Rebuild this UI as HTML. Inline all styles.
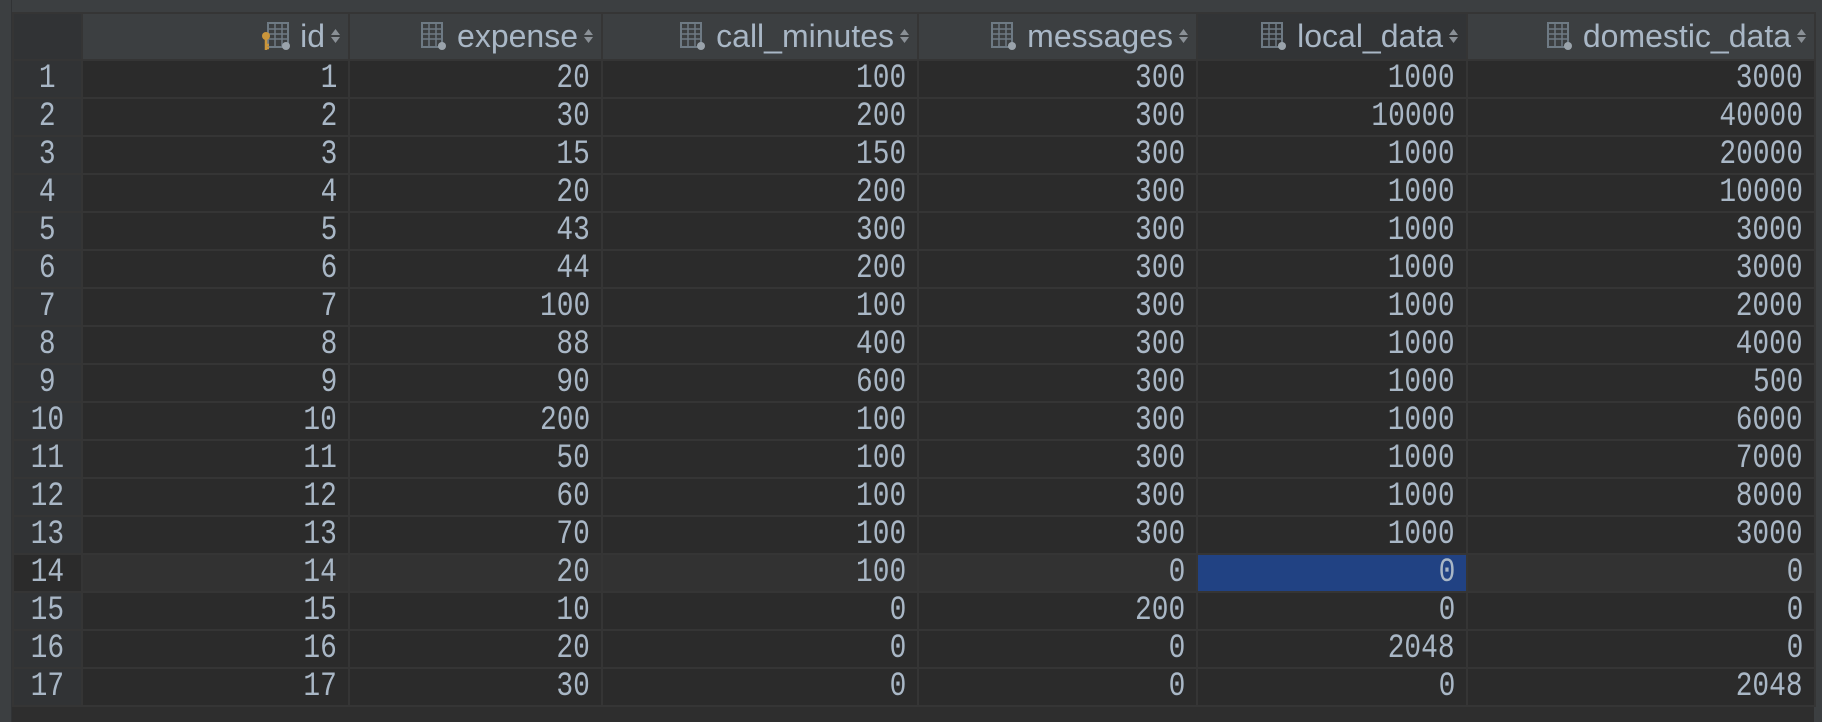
<!DOCTYPE html>
<html><head><meta charset="utf-8"><style>
html,body{margin:0;padding:0;width:1822px;height:722px;overflow:hidden;background:#2e2e2e;}
.top{position:absolute;left:0;top:0;width:1822px;height:12px;background:#3c3f41;}
.left{position:absolute;left:0;top:0;width:11px;height:722px;background:#3c3f41;border-right:1px solid #313335;}
.right{position:absolute;left:1814px;top:12px;width:8px;height:710px;background:#3c3f41;}
table{position:absolute;left:12px;top:12px;border-collapse:collapse;table-layout:fixed;width:1802px;}
td,th{border:2px solid #353535;padding:0 11px 0 0;text-align:right;color:#a9b7c6;white-space:nowrap;overflow:hidden;}
th{height:45px;background:#3c3f41;font:400 32px "Liberation Sans",sans-serif;padding-right:8px;}
th.sel{background:#323436;}
td{height:36px;background:#2b2b2b;font:400 34px "Liberation Mono",monospace;line-height:36px;}
td span{display:inline-block;transform:scaleX(0.82);transform-origin:100% 50%;}
td.rn span{transform-origin:50% 50%;}
td.rn,th.rn{background:#313335;text-align:center;padding:0;}
tr.hl td{background:#323232;}
tr.hl td.rn{background:#2b2b2b;}
td.cur{background:#214283 !important;}
.ic{display:inline-block;vertical-align:-4px;margin-right:8px;}
.ar{display:inline-block;vertical-align:3px;margin-left:6px;}
</style></head><body>
<div class="top"></div><div class="left"></div><div class="right"></div>
<table>
<colgroup><col style="width:69px"><col style="width:267px"><col style="width:253px"><col style="width:316px"><col style="width:279px"><col style="width:270px"><col style="width:348px"></colgroup>
<tr>
<th class="rn"></th>
<th><svg class="ic" width="30" height="30" viewBox="0 0 30 30"><rect x="6" y="2" width="20" height="24" fill="none" stroke="#6e7a84" stroke-width="2"/><path d="M6 8H26M6 13H26M6 18H26M13 2V26M20 2V26" stroke="#6e7a84" stroke-width="1.5"/><circle cx="24" cy="25" r="4" fill="#9aa3ab"/><circle cx="4" cy="15" r="4" fill="#c9953b"/><path d="M4 15V29M4 24H7M4 27H7" stroke="#c9953b" stroke-width="2.5"/></svg>id<svg class="ar" width="9" height="16" viewBox="0 0 9 16"><path d="M0 7L4.5 1L9 7ZM0 9L4.5 15L9 9Z" fill="#8a9096"/></svg></th>
<th><svg class="ic" width="30" height="30" viewBox="0 0 30 30"><rect x="3" y="2" width="20" height="24" fill="none" stroke="#6e7a84" stroke-width="2"/><path d="M3 8H23M3 13H23M3 18H23M10 2V26M17 2V26" stroke="#6e7a84" stroke-width="1.5"/><circle cx="23" cy="25" r="4" fill="#9aa3ab"/></svg>expense<svg class="ar" width="9" height="16" viewBox="0 0 9 16"><path d="M0 7L4.5 1L9 7ZM0 9L4.5 15L9 9Z" fill="#8a9096"/></svg></th>
<th><svg class="ic" width="30" height="30" viewBox="0 0 30 30"><rect x="3" y="2" width="20" height="24" fill="none" stroke="#6e7a84" stroke-width="2"/><path d="M3 8H23M3 13H23M3 18H23M10 2V26M17 2V26" stroke="#6e7a84" stroke-width="1.5"/><circle cx="23" cy="25" r="4" fill="#9aa3ab"/></svg>call_minutes<svg class="ar" width="9" height="16" viewBox="0 0 9 16"><path d="M0 7L4.5 1L9 7ZM0 9L4.5 15L9 9Z" fill="#8a9096"/></svg></th>
<th><svg class="ic" width="30" height="30" viewBox="0 0 30 30"><rect x="3" y="2" width="20" height="24" fill="none" stroke="#6e7a84" stroke-width="2"/><path d="M3 8H23M3 13H23M3 18H23M10 2V26M17 2V26" stroke="#6e7a84" stroke-width="1.5"/><circle cx="23" cy="25" r="4" fill="#9aa3ab"/></svg>messages<svg class="ar" width="9" height="16" viewBox="0 0 9 16"><path d="M0 7L4.5 1L9 7ZM0 9L4.5 15L9 9Z" fill="#8a9096"/></svg></th>
<th class="sel"><svg class="ic" width="30" height="30" viewBox="0 0 30 30"><rect x="3" y="2" width="20" height="24" fill="none" stroke="#6e7a84" stroke-width="2"/><path d="M3 8H23M3 13H23M3 18H23M10 2V26M17 2V26" stroke="#6e7a84" stroke-width="1.5"/><circle cx="23" cy="25" r="4" fill="#9aa3ab"/></svg>local_data<svg class="ar" width="9" height="16" viewBox="0 0 9 16"><path d="M0 7L4.5 1L9 7ZM0 9L4.5 15L9 9Z" fill="#8a9096"/></svg></th>
<th><svg class="ic" width="30" height="30" viewBox="0 0 30 30"><rect x="3" y="2" width="20" height="24" fill="none" stroke="#6e7a84" stroke-width="2"/><path d="M3 8H23M3 13H23M3 18H23M10 2V26M17 2V26" stroke="#6e7a84" stroke-width="1.5"/><circle cx="23" cy="25" r="4" fill="#9aa3ab"/></svg>domestic_data<svg class="ar" width="9" height="16" viewBox="0 0 9 16"><path d="M0 7L4.5 1L9 7ZM0 9L4.5 15L9 9Z" fill="#8a9096"/></svg></th>
</tr>
<tr><td class="rn"><span>1</span></td><td><span>1</span></td><td><span>20</span></td><td><span>100</span></td><td><span>300</span></td><td><span>1000</span></td><td><span>3000</span></td></tr>
<tr><td class="rn"><span>2</span></td><td><span>2</span></td><td><span>30</span></td><td><span>200</span></td><td><span>300</span></td><td><span>10000</span></td><td><span>40000</span></td></tr>
<tr><td class="rn"><span>3</span></td><td><span>3</span></td><td><span>15</span></td><td><span>150</span></td><td><span>300</span></td><td><span>1000</span></td><td><span>20000</span></td></tr>
<tr><td class="rn"><span>4</span></td><td><span>4</span></td><td><span>20</span></td><td><span>200</span></td><td><span>300</span></td><td><span>1000</span></td><td><span>10000</span></td></tr>
<tr><td class="rn"><span>5</span></td><td><span>5</span></td><td><span>43</span></td><td><span>300</span></td><td><span>300</span></td><td><span>1000</span></td><td><span>3000</span></td></tr>
<tr><td class="rn"><span>6</span></td><td><span>6</span></td><td><span>44</span></td><td><span>200</span></td><td><span>300</span></td><td><span>1000</span></td><td><span>3000</span></td></tr>
<tr><td class="rn"><span>7</span></td><td><span>7</span></td><td><span>100</span></td><td><span>100</span></td><td><span>300</span></td><td><span>1000</span></td><td><span>2000</span></td></tr>
<tr><td class="rn"><span>8</span></td><td><span>8</span></td><td><span>88</span></td><td><span>400</span></td><td><span>300</span></td><td><span>1000</span></td><td><span>4000</span></td></tr>
<tr><td class="rn"><span>9</span></td><td><span>9</span></td><td><span>90</span></td><td><span>600</span></td><td><span>300</span></td><td><span>1000</span></td><td><span>500</span></td></tr>
<tr><td class="rn"><span>10</span></td><td><span>10</span></td><td><span>200</span></td><td><span>100</span></td><td><span>300</span></td><td><span>1000</span></td><td><span>6000</span></td></tr>
<tr><td class="rn"><span>11</span></td><td><span>11</span></td><td><span>50</span></td><td><span>100</span></td><td><span>300</span></td><td><span>1000</span></td><td><span>7000</span></td></tr>
<tr><td class="rn"><span>12</span></td><td><span>12</span></td><td><span>60</span></td><td><span>100</span></td><td><span>300</span></td><td><span>1000</span></td><td><span>8000</span></td></tr>
<tr><td class="rn"><span>13</span></td><td><span>13</span></td><td><span>70</span></td><td><span>100</span></td><td><span>300</span></td><td><span>1000</span></td><td><span>3000</span></td></tr>
<tr class="hl"><td class="rn"><span>14</span></td><td><span>14</span></td><td><span>20</span></td><td><span>100</span></td><td><span>0</span></td><td class="cur"><span>0</span></td><td><span>0</span></td></tr>
<tr><td class="rn"><span>15</span></td><td><span>15</span></td><td><span>10</span></td><td><span>0</span></td><td><span>200</span></td><td><span>0</span></td><td><span>0</span></td></tr>
<tr><td class="rn"><span>16</span></td><td><span>16</span></td><td><span>20</span></td><td><span>0</span></td><td><span>0</span></td><td><span>2048</span></td><td><span>0</span></td></tr>
<tr><td class="rn"><span>17</span></td><td><span>17</span></td><td><span>30</span></td><td><span>0</span></td><td><span>0</span></td><td><span>0</span></td><td><span>2048</span></td></tr>
</table>
</body></html>
